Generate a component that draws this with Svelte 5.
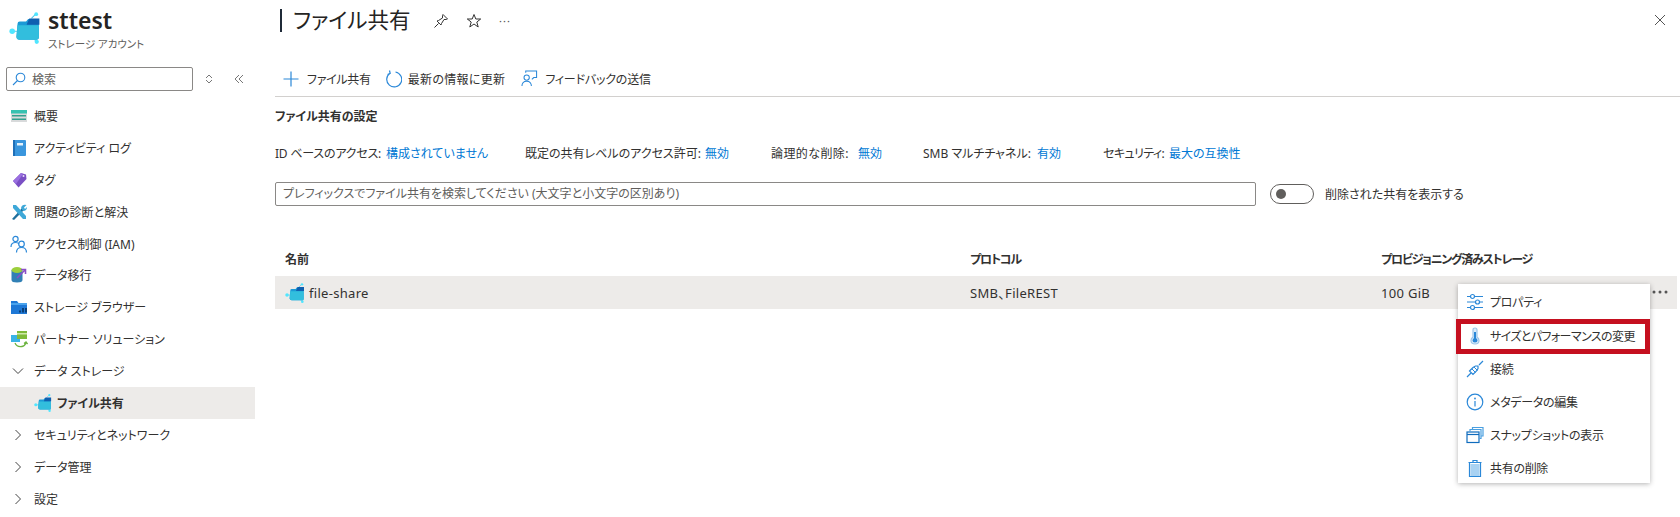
<script>
  const navTop = [
    ['overview', '概要'], ['log', 'アクティビティ ログ'], ['tag', 'タグ'], ['tools', '問題の診断と解決'],
    ['iam', 'アクセス制御 (IAM)'], ['migrate', 'データ移行'], ['browser', 'ストレージ ブラウザー'], ['partner', 'パートナー ソリューション']
  ];
  const status = [
    ['ID ベースのアクセス:', '構成されていません'], ['既定の共有レベルのアクセス許可:', '無効'], ['論理的な削除:', '無効'],
    ['SMB マルチチャネル:', '有効'], ['セキュリティ:', '最大の互換性']
  ];
  const menu = [
    ['props', 'プロパティ'], ['thermo', 'サイズとパフォーマンスの変更'], ['plug', '接続'],
    ['info', 'メタデータの編集'], ['snap', 'スナップショットの表示'], ['trash', '共有の削除']
  ];
</script>

{#snippet share(s)}
  <svg width={s} height={s} viewBox="0 0 30 30">
    <path d="M2 18H9M21 6 25 2M24 26 26 28" stroke="#50c7e8" stroke-width="1"/>
    <circle cx="3" cy="18" r="2.600" fill="#50e6ff"/><circle cx="25.500" cy="2" r="1.800" fill="#50e6ff"/><circle cx="26" cy="28" r="2" fill="#50e6ff"/>
    <path d="M8 11Q8 9 10 9H16L18 6.500H28V24Q28 26 26 26H10Q7 26 7 23Z" fill="#1b9ad6"/>
    <path d="M8 12.500H28V24Q28 26 26 26H10Q7 26 7 23Z" fill="#32bedd"/>
    <path d="M19 6H28.500V12H16.500Z" fill="#0f5fb0"/>
  </svg>
{/snippet}

{#snippet chev(open)}
  <svg width="12" height="12" viewBox="0 0 12 12" fill="none" stroke="#444" stroke-width="1">
    {#if open}<path d="M1 3.500 6 8.500 11 3.500"/>{:else}<path d="M3.500 1 8.500 6 3.500 11"/>{/if}
  </svg>
{/snippet}

{#snippet navIcon(k)}
  <svg width="18" height="18" viewBox="0 0 18 18">
    {#if k === 'overview'}
      <rect x="1" y="3" width="16" height="12" fill="#d8dadb"/><rect x="1" y="3" width="16" height="3.500" fill="#37c2b1"/><rect x="2" y="8" width="14" height="1.500" fill="#32a08f"/><rect x="2" y="11.500" width="14" height="1.500" fill="#32a08f"/>
    {:else if k === 'log'}
      <rect x="3" y="1" width="13" height="16" rx="1" fill="#3a96dd"/><rect x="3" y="1" width="2" height="16" fill="#1f6fb8"/><rect x="7" y="4" width="6" height="2.500" fill="#e6f2fb"/>
    {:else if k === 'tag'}
      <path d="M3 10 11 2 16 3.500 16.500 8 8.500 16.500Z" fill="#7a4fc4"/><path d="M3 10 11 2 13 3 6 13Z" fill="#9a6fe0"/><circle cx="13.500" cy="5" r="1" fill="#e8defa"/>
    {:else if k === 'tools'}
      <path d="M2 16 12 5 14 7 4 17Z" fill="#1f6f9c"/><path d="M3 2 6 2 16 13 16 16 13 16 3 5Z" fill="#3ea8d8"/><path d="M11 5Q12 1 16.500 2L14 4.500 15 6 17 4Q17 8 13 8Z" fill="#3ea8d8"/>
    {:else if k === 'iam'}
      <g fill="none" stroke="#2b88d8" stroke-width="1.200"><circle cx="5.500" cy="4" r="2.600"/><path d="M1 12Q1 7.500 5.500 7.500Q8 7.500 9 9"/><circle cx="11.500" cy="9" r="2.800"/><path d="M6.500 17.500Q6.500 12.500 11.500 12.500Q16.500 12.500 16.500 17.500"/></g>
    {:else if k === 'migrate'}
      <path d="M1.500 4V14Q1.500 16.500 7 16.500Q12.500 16.500 12.500 14V4Z" fill="#3180b5"/><ellipse cx="7" cy="4" rx="5.500" ry="3" fill="#9ccf3c"/><path d="M7 12 15 4M11 3.500H15.500V8" stroke="#8a4fc4" stroke-width="1.600" fill="none"/>
    {:else if k === 'browser'}
      <path d="M1 3H7L8.500 5H17V16H1Z" fill="#1e78d6"/><path d="M1 5H17V7H1Z" fill="#4aa3ec"/><rect x="9" y="12.500" width="2" height="2" fill="#0a3f78"/><rect x="12" y="10" width="2" height="4.500" fill="#0a3f78"/><rect x="15" y="10" width="2" height="4.500" fill="#0a3f78"/>
    {:else if k === 'partner'}
      <rect x="1" y="5" width="9" height="7" fill="#39b3e6"/><rect x="7" y="1" width="10" height="8" fill="#7fba3a"/><rect x="7" y="3" width="10" height="1.500" fill="#cfe8a8"/><path d="M5 13Q7 17.500 12 16.500Q15 16 16 12.500M14 13.500 16 12 17.500 14" fill="none" stroke="#6cb33f" stroke-width="1.300"/>
    {/if}
  </svg>
{/snippet}

{#snippet menuIcon(k)}
  <svg width="18" height="18" viewBox="0 0 18 18" fill="none" stroke="#2b88d8" stroke-width="1.200">
    {#if k === 'props'}
      <path d="M1 3.500H4M9 3.500H17M1 9H9M14 9H17M1 14.500H4M9 14.500H17"/><circle cx="6.500" cy="3.500" r="2"/><circle cx="11.500" cy="9" r="2"/><circle cx="6.500" cy="14.500" r="2"/>
    {:else if k === 'thermo'}
      <path d="M7 10V3Q7 1 9 1Q11 1 11 3V10Q13 11.500 13 13.500Q13 17 9 17Q5 17 5 13.500Q5 11.500 7 10Z" fill="#dcebf8" stroke="#9cc6ea"/><path d="M8 5V11Q6.500 12 6.500 13.500Q6.500 15.500 9 15.500Q11.500 15.500 11.500 13.500Q11.500 12 10 11V5Z" fill="#2b88d8" stroke="none"/>
    {:else if k === 'plug'}
      <path d="M1 17 5 13M17 1 13 5"/><path d="M3.500 11 7 7.500 9.500 6 12 6 12 8.500 10.500 11 7 14.500Z"/><path d="M6 9 9.500 12.500M8 7 11.500 10.500" stroke-width="1"/>
    {:else if k === 'info'}
      <circle cx="9" cy="9" r="7.800"/><path d="M9 8V13.500"/><circle cx="9" cy="5.500" r="0.900" fill="#2b88d8" stroke="none"/>
    {:else if k === 'snap'}
      <rect x="1" y="6" width="12" height="10.500" fill="#fff" stroke="#0f6cbd"/><path d="M1 8.500H13" stroke="#0f6cbd"/><path d="M4 5.500V3.500H15V12.500H13.500M6.500 3.500V1.500H17V10H15.500" stroke="#4a9fe0"/>
    {:else}
      <rect x="4.500" y="5" width="9" height="12" fill="#a9d2f2" stroke="none"/><path d="M2.500 3.500H15.500M7 3V1.500H11V3M3.500 3.500V17.500H14.500V3.500" stroke="#2b88d8"/>
    {/if}
  </svg>
{/snippet}

<div class="page">
  <aside class="side">
    <header class="brand">
      <span class="logo">{@render share(32)}</span>
      <div class="brand-text">
        <div class="name">sttest</div>
        <div class="kind">ストレージ アカウント</div>
      </div>
    </header>
    <div class="searchrow">
      <div class="search">
        <svg width="14" height="14" viewBox="0 0 14 14" fill="none" stroke="#2b88d8" stroke-width="1.100"><circle cx="8.500" cy="5.500" r="4.300"/><path d="M5.500 8.500 1 13"/></svg>
        <span>検索</span>
      </div>
      <svg class="updown" width="10" height="10" viewBox="0 0 10 10" fill="none" stroke="#777"><path d="M2 4 5 1 8 4M2 6 5 9 8 6"/></svg>
      <svg class="collapse" width="10" height="10" viewBox="0 0 10 10" fill="none" stroke="#777"><path d="M5 1 1 5 5 9M9 1 5 5 9 9"/></svg>
    </div>
    <nav class="nav">
      {#each navTop as [k, label]}
        <div class="item"><span class="ic">{@render navIcon(k)}</span>{label}</div>
      {/each}
      <div class="item"><span class="ic chev">{@render chev(true)}</span>データ ストレージ</div>
      <div class="item sel"><span class="sub">{@render share(18)}</span>ファイル共有</div>
      <div class="item"><span class="ic chev">{@render chev(false)}</span>セキュリティとネットワーク</div>
      <div class="item"><span class="ic chev">{@render chev(false)}</span>データ管理</div>
      <div class="item"><span class="ic chev">{@render chev(false)}</span>設定</div>
    </nav>
  </aside>

  <main class="main">
    <div class="titlebar">
      <span class="bar"></span>
      <h1>ファイル共有</h1>
      <svg class="pin" width="16" height="16" viewBox="0 0 16 16" fill="none" stroke="#333"><path d="M10 1.500 14.500 6 13.500 6.500 11 6.500 8.500 10.500 8 12 4 8 5.500 7.500 9.500 5 9.500 2.500ZM5.500 10.500 1.500 14.500"/></svg>
      <svg class="star" width="16" height="16" viewBox="0 0 16 16" fill="none" stroke="#333"><path d="M8 1.500 9.800 6H14.700L10.800 9 12.200 14 8 11 3.800 14 5.200 9 1.300 6H6.200Z"/></svg>
      <span class="more">···</span>
      <svg class="close" width="12" height="12" viewBox="0 0 12 12" stroke="#555" fill="none"><path d="M1 1 11 11M11 1 1 11"/></svg>
    </div>

    <div class="toolbar">
      <div class="tool add"><svg width="16" height="16" viewBox="0 0 16 16" stroke="#2b88d8" stroke-width="1.200"><path d="M8 0.500V15.500M0.500 8H15.500"/></svg>ファイル共有</div>
      <div class="tool refresh"><svg width="18" height="18" viewBox="0 0 18 18" fill="none" stroke="#2b88d8" stroke-width="1.200"><path d="M6 3.200A7.500 7.500 0 1 0 11.500 2M5.500 0.500 6.200 3.400 3.500 4.500"/></svg>最新の情報に更新</div>
      <div class="tool feedback"><svg width="17" height="17" viewBox="0 0 18 18" fill="none" stroke="#2b88d8" stroke-width="1.100"><circle cx="6" cy="8" r="2.800"/><path d="M1 17Q1 12 6 12Q11 12 11 17M5 3V1H16.500V8H13.500L11.500 10"/></svg>フィードバックの送信</div>
    </div>

    <h2>ファイル共有の設定</h2>

    <div class="status">
      {#each status as [k, v]}
        <div><span class="k">{k}</span><a href="#top">{v}</a></div>
      {/each}
    </div>

    <div class="filter">
      <div class="input">プレフィックスでファイル共有を検索してください (大文字と小文字の区別あり)</div>
      <div class="toggle"><span></span></div>
      <div>削除された共有を表示する</div>
    </div>

    <div class="table">
      <div class="row head"><div>名前</div><div class="tight">プロトコル</div><div class="tight">プロビジョニング済みストレージ</div></div>
      <div class="row body">
        <div class="fname">{@render share(20)}file-share</div>
        <div>SMB、FileREST</div>
        <div>100 GiB</div>
        <svg class="dots" width="16" height="4" viewBox="0 0 16 4" fill="#555"><circle cx="2" cy="2" r="1.500"/><circle cx="8" cy="2" r="1.500"/><circle cx="14" cy="2" r="1.500"/></svg>
      </div>
    </div>

    <div class="menu">
      {#each menu as [k, label], i}
        <div class="mi" class:red={i === 1}><span class="mic">{@render menuIcon(k)}</span>{label}</div>
      {/each}
    </div>
  </main>
</div>

<style>
  :global(body) { margin: 0; background: #fff; }
  .page {
    display: flex; width: 1680px; height: 517px; overflow: hidden; position: relative;
    font-family: "Noto Sans", "Noto Sans CJK JP", sans-serif;
    font-size: 12px; color: #323130; font-feature-settings: "palt";
  }
  .side { width: 255px; flex: none; }
  .brand { display: flex; padding: 5px 0 0 9px; height: 59px; box-sizing: border-box; }
  .logo { width: 39px; padding-top: 7px; }
  .name { font-size: 23px; font-weight: 600; line-height: 30px; color: #252423; }
  .kind { font-size: 10.500px; line-height: 16px; color: #605e5c; margin-top: 1px; }
  .searchrow { display: flex; align-items: center; padding-left: 6px; height: 24px; margin-top: 8px; }
  .search {
    width: 187px; height: 24px; box-sizing: border-box; border: 1px solid #8a8886; border-radius: 2px;
    display: flex; align-items: center; gap: 6px; padding-left: 5px; color: #605e5c; font-size: 12px;
  }
  .updown { margin-left: 11px; }
  .collapse { margin-left: 20px; }
  .nav { margin-top: 9px; }
  .item { height: 31.900px; display: flex; align-items: center; padding-left: 10px; }
  .ic { width: 24px; flex: none; display: flex; }
  .chev { padding-left: 2px; width: 22px; }
  .sub { padding-left: 24px; width: 23px; display: flex; }
  .sel { background: #edebe9; font-weight: 700; }
  .main { flex: 1; padding-left: 20px; position: relative; }
  .titlebar { display: flex; align-items: center; height: 40px; position: relative; }
  .bar { width: 2px; height: 23px; background: #1f2a38; margin: 0 11px 0 5px; flex: none; }
  h1 { margin: 0 0 3px; font-size: 21.500px; font-weight: 400; color: #252423; width: 140px; white-space: pre; }
  .pin { margin-top: 2px; }
  .star { margin: 2px 0 0 17px; }
  .more { margin-left: 17px; color: #555; font-size: 11px; letter-spacing: 1px; }
  .close { position: absolute; right: 14px; top: 14px; }
  .toolbar { display: flex; align-items: center; height: 36px; margin-top: 21px; border-bottom: 1px solid #d2d0ce; padding-left: 8px; gap: 12px; box-sizing: border-box; }
  .tool { display: flex; align-items: center; gap: 8px; }
  .add { letter-spacing: -0.300px; }
  .refresh { gap: 6px; margin-left: 1px; letter-spacing: 0.300px; }
  .feedback { gap: 7px; margin-left: 4px; letter-spacing: -0.200px; }
  h2 { margin: 11px 0 0; font-size: 12px; line-height: 18px; font-weight: 700; }
  .status { display: grid; grid-template-columns: 250px 246px 152px 180px auto; margin-top: 19px; line-height: 18px; height: 18px; white-space: nowrap; }
  .k { display: inline-block; }
  .status div:nth-child(1) .k { width: 111px; letter-spacing: -0.200px; }
  .status div:nth-child(2) .k { width: 180px; }
  .status div:nth-child(3) .k { width: 87px; letter-spacing: 0.400px; }
  .status div:nth-child(4) .k { width: 114px; }
  .status div:nth-child(5) .k { width: 66px; letter-spacing: -0.600px; }
  .status a { color: #0078d4; text-decoration: none; }
  .filter { display: flex; align-items: center; margin-top: 18px; height: 26px; }
  .input {
    width: 981px; height: 24px; box-sizing: border-box; border: 1px solid #8a8886; border-radius: 2px;
    padding-left: 7px; line-height: 21px; color: #605e5c; margin-right: 14px;
  }
  .toggle { width: 44px; height: 20px; box-sizing: border-box; border: 1px solid #605e5c; border-radius: 10px; display: flex; align-items: center; padding-left: 5px; margin-right: 11px; }
  .toggle span { width: 10px; height: 10px; border-radius: 50%; background: #605e5c; }
  .table { margin-top: 36px; margin-right: 3px; }
  .row { display: grid; grid-template-columns: 685px 411px 1fr; align-items: center; position: relative; padding-left: 10px; }
  .head { height: 33px; padding-bottom: 2px; box-sizing: border-box; font-weight: 700; }
  .tight { letter-spacing: -1.200px; }
  .body { height: 33px; background: #edebe9; font-size: 13px; letter-spacing: 0.300px; }
  .fname { display: flex; align-items: center; gap: 4px; }
  .dots { position: absolute; left: 1377px; top: 14px; }
  .menu {
    position: absolute; left: 1203px; top: 284px; width: 192px; background: #fff;
    box-shadow: 0 1px 5px rgba(0,0,0,.3); padding: 2px 0 0; box-sizing: border-box; height: 199px;
    letter-spacing: -0.300px;
  }
  .mi { height: 32.800px; display: flex; align-items: center; padding-left: 8px; box-sizing: border-box; }
  .mic { width: 24px; display: flex; flex: none; }
  .red { outline: 5px solid #c50f1f; outline-offset: -5px; height: 35px; margin: 0 0 -1px -2px; padding-left: 10px; width: 194px; letter-spacing: -0.600px; }
</style>
